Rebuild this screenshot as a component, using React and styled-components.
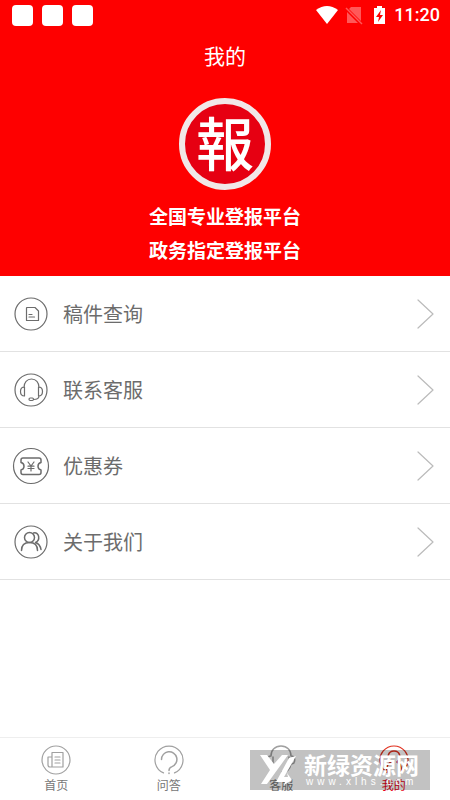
import React from "react";
import styled, { createGlobalStyle } from "styled-components";

const GlobalStyle = createGlobalStyle`
  * {
    box-sizing: border-box;
  }
  body {
    margin: 0;
    background: #fff;
    font-family: "Noto Sans CJK SC", sans-serif;
  }
`;

const Page = styled.div`
  display: flex;
  flex-direction: column;
  min-height: 100vh;
`;

const Header = styled.header`
  display: flex;
  flex-direction: column;
  align-items: center;
  padding-bottom: 9px;
  color: #fff;
  background: #fe0000;
`;

const StatusBar = styled.div`
  display: flex;
  align-items: center;
  justify-content: space-between;
  align-self: stretch;
  height: 30px;
  padding: 0 10px 0 12px;
`;

const StatusGroup = styled.div`
  display: flex;
  align-items: center;
  gap: ${(props) => props.$gap};
`;

const Notice = styled.span`
  width: 21px;
  height: 21px;
  background: #fff;
  border-radius: 4px;
`;

const Time = styled.time`
  font: 500 18px/30px Roboto, sans-serif;
`;

const Title = styled.h1`
  margin: 10px 0 28px;
  font-size: 21px;
  font-weight: 400;
  line-height: 30px;
`;

const Logo = styled.div`
  display: flex;
  align-items: center;
  justify-content: center;
  width: 92px;
  height: 92px;
  margin-bottom: 9px;
  font-size: 58px;
  font-weight: 500;
  line-height: 72px;
  padding-bottom: 6px;
  background: #e60012;
  border: 6px solid #f1e8e8;
  border-radius: 50%;
`;

const Slogan = styled.p`
  margin: 0;
  font-size: 19px;
  font-weight: 700;
  line-height: 34px;
`;

const Menu = styled.nav`
  flex: 1;
`;

const MenuRow = styled.a`
  display: flex;
  align-items: center;
  height: 76px;
  padding: 0 15px 0 12px;
  color: #6c6c6c;
  font-size: 20px;
  text-decoration: none;
  border-bottom: 1px solid #e2e2e2;

  span {
    flex: 1;
    margin-left: 13px;
  }
`;

const LineIcon = styled.svg`
  flex: none;
  fill: none;
  stroke: currentColor;
  stroke-width: ${(props) => props.$weight || 1.2};
  stroke-linecap: round;
  stroke-linejoin: round;
`;

const TabBar = styled.nav`
  position: relative;
  display: flex;
  height: 63px;
  border-top: 1px solid #eee;
`;

const Tab = styled.a`
  display: flex;
  flex: 1;
  flex-direction: column;
  align-items: center;
  padding-top: 7px;
  color: ${(props) => (props.$active ? "#e60012" : "#777")};
  font-size: 12px;
  line-height: 18px;
  text-decoration: none;

  svg {
    margin-bottom: 1px;
    color: ${(props) => (props.$active ? "#e0301e" : "#a0a0a0")};
  }
`;

const Watermark = styled.div`
  position: absolute;
  right: 20px;
  bottom: 10px;
  display: flex;
  align-items: center;
  width: 180px;
  height: 40px;
  padding-left: 10px;
  color: #fff;
  background: rgba(0, 0, 0, 0.24);
  pointer-events: none;
`;

const WatermarkText = styled.div`
  margin-left: 8px;
  white-space: nowrap;

  strong {
    display: block;
    font-size: 23px;
    font-weight: 700;
    line-height: 24px;
  }
  small {
    display: block;
    padding-left: 2px;
    font: 10px/12px "Liberation Sans", sans-serif;
    letter-spacing: 4px;
  }
`;

const menu = [
  {
    label: "稿件查询",
    radius: 16,
    drawing: (
      <path d="M15 12.500h8l3.500 3.500v9.500h-12V13zM17 19.500h3M17 22h5.500" />
    ),
  },
  {
    label: "联系客服",
    radius: 16,
    drawing: (
      <>
        <path d="M12 16.500c0-5 3-8.500 7.500-8.500s7.500 3.500 7.500 8.500M12.500 16v9c-2.500 0-4-2-4-4.500s1.500-4.500 4-4.500zM26.500 16v9c2.500 0 4-2 4-4.500s-1.500-4.500-4-4.500zM27 25c0 2-2 3.500-5.500 3.500" />
        <rect x="17" y="27" width="4.500" height="2.500" rx="1.200" />
      </>
    ),
  },
  {
    label: "优惠券",
    radius: 17.5,
    drawing: (
      <>
        <path
          strokeWidth="1.500"
          d="M11 11h16q2 0 2 2v2.500c-4 1-4 6.500 0 7.500v2.500q0 2-2 2H11q-2 0-2-2V23c4-1 4-6.500 0-7.500V13q0-2 2-2z"
        />
        <path d="M16 15l3 4 3-4M16 19.200h6M16 21.500h6M19 19v5" />
      </>
    ),
  },
  {
    label: "关于我们",
    radius: 16,
    drawing: (
      <g strokeWidth="1.500">
        <circle cx="17.500" cy="14.500" r="5" />
        <path d="M9.500 27.500c0-5 3-8 8-8s8 3 8 8M21.500 10c6-1.500 7 7.500 2 9.500 3 1 5 4 5.500 7" />
      </g>
    ),
  },
];

const tabs = [
  {
    label: "首页",
    drawing: (
      <>
        <circle cx="15" cy="15" r="14" />
        <path d="M11 7.500h11v14.500H9q-2 0-2-2v-8h4M11 7.500V22M14 12h5M14 15h5M14 18h5" />
      </>
    ),
  },
  {
    label: "问答",
    drawing: (
      <>
        <path d="M9.500 27.900a14 14 0 1 1 11 0" />
        <path
          strokeWidth="1.500"
          d="M7.500 14.500a7.700 7.700 0 1 1 10.500 7.100q-3 1-3 3.900M15 28v.500"
        />
      </>
    ),
  },
  {
    label: "客服",
    drawing: (
      <path
        strokeWidth="1.500"
        d="M5 11C5 5 9 1 15 1s10 4 10 10M5 11c-5 0-5 8 0 8h2v-7M25 11c5 0 5 8 0 8h-2v-7M25 19c-1 5-4 8-9 8"
      />
    ),
  },
  {
    label: "我的",
    active: true,
    drawing: (
      <>
        <path d="M8 27.100a14 14 0 1 1 14 0" />
        <path
          strokeWidth="1.500"
          d="M12 17c-5-4-3-11 3-11s8 7 3 11c4 2 5 5 4 10M12 17c-4 2-5 5-4 10"
        />
      </>
    ),
  },
];

function StatusIcons() {
  return (
    <svg width="72" height="20" viewBox="0 0 72 20" aria-hidden="true">
      <path fill="#fff" d="M0 5Q11-3 22 5L11 19z" />
      <path fill="#ff5858" d="M35 2h10v14L33 4zM31 7l11 11H31z" />
      <path stroke="#ff5858" strokeWidth="1.500" d="M30 3l16 16" />
      <path fill="#fff" d="M61 1h5v2h3v16H58V3h3z" />
      <path fill="#fe0000" d="M65 5l-5 7h3l-1 5 5-7h-3z" />
    </svg>
  );
}

export default function App() {
  return (
    <Page>
      <GlobalStyle />
      <Header>
        <StatusBar>
          <StatusGroup $gap="9px">
            <Notice />
            <Notice />
            <Notice />
          </StatusGroup>
          <StatusGroup $gap="6px">
            <StatusIcons />
            <Time>11:20</Time>
          </StatusGroup>
        </StatusBar>
        <Title>我的</Title>
        <Logo lang="zh-Hant">報</Logo>
        <Slogan>全国专业登报平台</Slogan>
        <Slogan>政务指定登报平台</Slogan>
      </Header>
      <Menu>
        {menu.map(({ label, radius, drawing }) => (
          <MenuRow href="#" key={label}>
            <LineIcon width="38" height="38" aria-hidden="true">
              <circle cx="19" cy="19" r={radius} />
              {drawing}
            </LineIcon>
            <span>{label}</span>
            <LineIcon width="18" height="30" color="#bbb" aria-hidden="true">
              <path d="M1 1l15 14L1 29" />
            </LineIcon>
          </MenuRow>
        ))}
      </Menu>
      <TabBar>
        {tabs.map(({ label, active, drawing }) => (
          <Tab href="#" key={label} $active={active}>
            <LineIcon width="30" height="30" aria-hidden="true">
              {drawing}
            </LineIcon>
            {label}
          </Tab>
        ))}
        <Watermark>
          <svg width="36" height="32" viewBox="0 0 36 32" aria-hidden="true">
            <path
              fill="#fff"
              d="M0 1h7l7 9 8-9h6L7 30H1l9-14zM29 4l7-2-12 21h4l-1-4 5 7-8 5 1-3h-9z"
            />
          </svg>
          <WatermarkText>
            <strong>新绿资源网</strong>
            <small>www.xlhs.com</small>
          </WatermarkText>
        </Watermark>
      </TabBar>
    </Page>
  );
}
